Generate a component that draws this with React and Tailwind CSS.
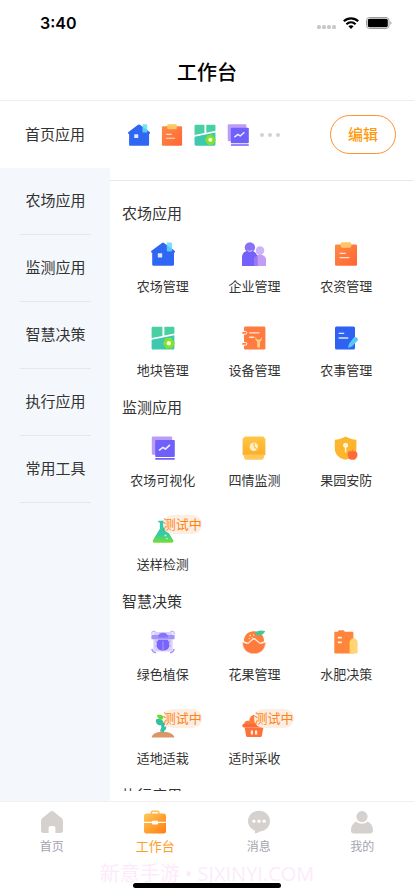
import { useState } from "react";

const HouseIcon = ({ className }) => (
  <svg viewBox="0 0 24 24" className={className} aria-hidden="true">
    <path
      d="M11 .9a1.500 1.500 0 0 1 2 0L23.600 8.800c.8.7.5 2-.6 2v11.800c0 .8-.5 1.200-1.200 1.200H2.400c-.8 0-1.200-.5-1.200-1.200V10.800c-1.200 0-1.500-1.300-.7-2z"
      fill="#2f66f3"
    />
    <rect x="6.800" y="11.200" width="4.400" height="4.200" rx=".5" fill="#dbe8ff" />
    <rect x="15.800" y=".4" width="5.200" height="9" rx=".8" fill="#5fd9f5" fillOpacity=".85" />
  </svg>
);

const PeopleIcon = ({ className }) => (
  <svg viewBox="0 0 24 24" className={className} aria-hidden="true">
    <circle cx="18" cy="8.600" r="4.300" fill="#cdb4f9" />
    <path d="M12 24v-6c0-3.400 2.200-5.200 6-5.200s6.200 2 6.200 5.400V24z" fill="#c39cf8" />
    <circle cx="7.900" cy="5.400" r="5.200" fill="#8a72f6" />
    <path d="M0 24v-8.600C0 11.200 2.800 8.800 7.700 8.800s7.600 2.400 7.600 6.600V24z" fill="#7460fa" />
    <path d="M15.300 13.600V24H12v-6.400c0-1.800 1-3.400 3.300-4z" fill="#9a78f2" />
    <path d="M5.400 8.200c1.300 1.500 3.600 1.500 4.900 0" fill="none" stroke="#e4dcff" strokeWidth=".9" />
  </svg>
);

const ClipboardIcon = ({ className }) => (
  <svg viewBox="0 0 24 24" className={className} aria-hidden="true">
    <defs>
      <linearGradient id="clip" x1="0" y1="0" x2="1" y2="1">
        <stop offset="0" stopColor="#ff8a45" />
        <stop offset="1" stopColor="#ff6534" />
      </linearGradient>
    </defs>
    <rect x="1" y="2.400" width="22" height="21.400" rx="1.400" fill="url(#clip)" />
    <rect x="6.800" y=".3" width="10.400" height="5.400" rx="1.400" fill="#ffc764" />
    <path d="M5.600 11.300h6M5.600 15.600h9.800" stroke="#ffe2d0" strokeWidth="1.200" />
  </svg>
);

const FieldIcon = ({ className }) => (
  <svg viewBox="0 0 24 24" className={className} aria-hidden="true">
    <path d="M2 .8h9.400v9.100L.6 12V2.200C.6 1.300 1.100.8 2 .8z" fill="#48cfa4" />
    <path d="M13.400.8H22c.9 0 1.400.5 1.400 1.400v5.200l-10 2.100z" fill="#48cfa4" />
    <path d="M.6 13.800 23.400 9.200v13c0 .9-.5 1.400-1.400 1.400H2c-.9 0-1.400-.5-1.400-1.400z" fill="#3dc8af" />
    <path d="m14.500 12.200 5.400-.4 4 5.300-2.700 5.200-5.800.5-3.400-5.200z" fill="#86e02d" />
    <circle cx="17.800" cy="17.300" r="2.200" fill="#eaffd7" />
  </svg>
);

const DeviceIcon = ({ className }) => (
  <svg viewBox="0 0 24 24" className={className} aria-hidden="true">
    <rect x="2" y=".6" width="21.400" height="23" rx="1.400" fill="#ff7b40" />
    <path
      d="M.4 5.400h3a1.400 1.400 0 0 1 0 2.800h-3M.4 16.400h3a1.400 1.400 0 0 1 0 2.800h-3"
      fill="#ff7b40"
      stroke="#fff"
      strokeWidth="1"
    />
    <path d="M7.200 6.900h10.300M7.200 11.200h5" stroke="#ffe6d6" strokeWidth="1.400" />
    <path
      d="M13.800 10.800c-1 2.200-.1 4 1.400 4.900v4.700c0 1.800 2.800 1.800 2.800 0v-4.700c1.600-.9 2.400-2.700 1.400-4.900l-.9 2.700h-3.800z"
      fill="#ffd085"
    />
  </svg>
);

const FarmWorkIcon = ({ className }) => (
  <svg viewBox="0 0 24 24" className={className} aria-hidden="true">
    <rect x="1" y=".4" width="20" height="23.200" rx="1.500" fill="#2f62f2" />
    <path d="M4.600 7.400h5.600M4.600 12h9.600" stroke="#dce6ff" strokeWidth="1.300" />
    <path d="M19.800 11.400c1.600-1.500 5.200.8 3.800 3l-5.600 6.200-4 1.300.9-3.800z" fill="#54c9f8" />
  </svg>
);

const ChartIcon = ({ className }) => (
  <svg viewBox="0 0 24 24" className={className} aria-hidden="true">
    <rect x=".8" y=".4" width="20.400" height="18.400" rx="1.200" fill="#bd9cf8" />
    <rect x="4.200" y="4" width="19.600" height="17" rx="1" fill="#7060fa" />
    <path d="m8 14.300 4-3 2.400 1.800 4.600-4.200" fill="none" stroke="#f0edff" strokeWidth="1.500" strokeLinejoin="round" />
    <rect x="4.200" y="22" width="19.600" height="1.800" rx=".6" fill="#7060fa" />
  </svg>
);

const MonitorIcon = ({ className }) => (
  <svg viewBox="0 0 24 24" className={className} aria-hidden="true">
    <defs>
      <linearGradient id="monitor" x1="0" y1="0" x2="0" y2="1">
        <stop offset="0" stopColor="#ffc648" />
        <stop offset="1" stopColor="#fdae25" />
      </linearGradient>
    </defs>
    <path d="M2.800.6h18.400l2.200 2.300v16.400H.6V2.900z" fill="url(#monitor)" />
    <path d="M2 18.400h20v3l-1.500 2.400h-17L2 21.400z" fill="#ffc75a" />
    <circle cx="11.800" cy="10.700" r="4.200" fill="#ffeec5" />
    <path d="M12 10.600V6.900M12 10.600l3 2.600" stroke="#fdbb3c" strokeWidth="1.100" />
  </svg>
);

const ShieldIcon = ({ className }) => (
  <svg viewBox="0 0 24 24" className={className} aria-hidden="true">
    <path
      d="M11.600.6c3.400 2.100 6.600 3 10.800 3.200v8.700c0 5.700-4 9.800-10.900 11.300C4.700 22.300.8 18.200.8 12.500V3.800C4.900 3.600 8.200 2.700 11.600.6z"
      fill="#fdb52c"
    />
    <circle cx="11.600" cy="9.200" r="2.500" fill="#fff4d8" />
    <path d="M11.600 10.500v5.300" stroke="#fff4d8" strokeWidth="1.500" strokeLinecap="round" />
    <path
      d="M18.300 15.600c2.700-1.700 5.300-.2 5.200 3.200-.1 2.600-2 5-3.600 5h-2.800c-1.900-.2-3.500-2.400-3.500-5 0-3.300 2.200-4.800 4.700-3.200z"
      fill="#ff6a3a"
    />
    <path d="M18.300 15.800c.1-1.200.4-1.900 1-2.500" stroke="#ff6a3a" strokeWidth="1" fill="none" />
  </svg>
);

const FlaskIcon = ({ className }) => (
  <svg viewBox="0 0 24 24" className={className} aria-hidden="true">
    <defs>
      <linearGradient id="flask" x1="0" y1="0" x2="0" y2="1">
        <stop offset="0" stopColor="#31c6bb" />
        <stop offset=".6" stopColor="#34cba4" />
        <stop offset="1" stopColor="#74e032" />
      </linearGradient>
    </defs>
    <path
      d="M7.400.8h8.400c.9 0 .9 1.600 0 1.600h-.5v6.400l6.800 11.300c.9 1.500.1 2.700-1.300 2.700H3.400C2 22.800 1.200 21.600 2.100 20.100L8.900 8.800V2.400h-.9C7 2.400 7 .8 7.400.8z"
      fill="url(#flask)"
    />
    <circle cx="14.500" cy="15.400" r="1" fill="#c7f4e2" />
    <circle cx="16" cy="18.600" r=".8" fill="#c7f4e2" />
  </svg>
);

const BugIcon = ({ className }) => (
  <svg viewBox="0 0 24 24" className={className} aria-hidden="true">
    <rect x="2.400" y="2" width="19.200" height="19.600" rx="1.600" fill="#dccffc" />
    <path d="M.9 4.500V3A1.700 1.700 0 0 1 2.600 1.300h2M23.100 4.500V3a1.700 1.700 0 0 0-1.700-1.700h-2" stroke="#c4b3fa" strokeWidth="1.200" fill="none" />
    <path d="M.9 18.800c.3 2.200 1.600 3.600 4 4M23.100 18.800c-.3 2.200-1.600 3.600-4 4" stroke="#a792f8" strokeWidth="1.400" fill="none" />
    <rect x=".4" y="5" width="23.200" height="4.200" rx=".7" fill="#a295fa" />
    <path d="M7.400 5.800c0-4.200 9.200-4.200 9.200 0v1.600H7.400z" fill="#8474f9" />
    <path d="M7.200 9.800h9.600l1.400 2.400v3.200c0 3.200-2.500 5.100-6.200 5.100s-6.200-1.900-6.200-5.100v-3.200z" fill="#7764fa" />
    <path d="M12 11.400v9M6.500 11.800l-2-.8M17.500 11.800l2-.8M6 15.500l-1.800.8M18 15.500l1.800.8" stroke="#a99afc" strokeWidth="1" />
  </svg>
);

const FruitIcon = ({ className }) => (
  <svg viewBox="0 0 24 24" className={className} aria-hidden="true">
    <path d="M1.900 11.200C2 5.200 6 1.300 12 1.300s10 3.900 10.100 9.900l-4.100 1.600-4.700-4.200c-.8-.7-1.900-.7-2.700 0L6 12.800z" fill="#ff7f3a" />
    <path
      d="M.5 12.200c2.400.6 3.700 1.400 5.600 1.500l4.600-3.900c.8-.7 1.700-.7 2.500 0l4.700 3.900c1.900-.1 3.300-.9 5.600-1.500 0 6.900-4.700 11.600-11.500 11.600S.5 19.100.5 12.200z"
      fill="#ff7a3c"
      stroke="#ffe0cb"
      strokeWidth=".7"
    />
    <path d="M12.700 3.300C14.700.3 19 0 23.200 1.100c-1.500 3.700-5 5-8.600 4z" fill="#42c79d" />
    <circle cx="8.200" cy="5.600" r=".8" fill="#fff0e4" />
    <circle cx="11.600" cy="5" r=".7" fill="#fff0e4" />
    <circle cx="7.200" cy="8.600" r=".7" fill="#fff0e4" />
    <circle cx="10" cy="7.600" r=".6" fill="#fff0e4" />
  </svg>
);

const FertilizerIcon = ({ className }) => (
  <svg viewBox="0 0 24 24" className={className} aria-hidden="true">
    <defs>
      <linearGradient id="fertilizer" x1="0" y1="0" x2="1" y2="0">
        <stop offset="0" stopColor="#ffd95c" />
        <stop offset="1" stopColor="#ffd285" />
      </linearGradient>
    </defs>
    <path d="M1.700 1.700h2L5 .3h4.500l1.400 1.400h7.200c.8 0 1.300.5 1.300 1.300v20.600H1.600C.8 23.600.3 23.100.3 22.300V3c0-.8.5-1.300 1.400-1.300z" fill="#ff853c" />
    <path d="M3.800 7.600h4M3.800 12.400h4" stroke="#fff2e6" strokeWidth="1.900" />
    <path d="M15.600 12.200c0-2.300 2.300-4 4.100-4 2 0 3.900 1.700 3.900 4v11.400h-8z" fill="url(#fertilizer)" />
  </svg>
);

const SproutIcon = ({ className }) => (
  <svg viewBox="0 0 24 24" className={className} aria-hidden="true">
    <path d="M.8 23.600c-.4-2.600 3-5.900 11-5.900s11.700 3.300 11.400 5.900z" fill="#dd9466" />
    <path d="M12.400 18.400c-2-3.600-.6-7-2-10M11.400 16c.1-4 2-7 5-8.400" stroke="#34c1a0" strokeWidth="1.800" fill="none" />
    <path d="M5 5.400c4-1.600 7.700.3 8 5-4.200 1.800-9 .5-8-5z" fill="#34c1a0" />
    <path d="M6 .9c3.500-.6 7.500.1 6.900 4.200-3.500.8-6.800-.4-6.900-4.200z" fill="#63df2a" />
    <path d="M13.300 9.200c.2-5 3.400-7.700 7.700-7.600.7 4.800-2.200 8.300-7.700 7.600z" fill="#46d280" />
    <path d="M9 17.400c.4-3.700 3-5.500 6.400-4.900-.1 3.900-2.700 6-6.400 4.900z" fill="#34c1a0" />
  </svg>
);

const BasketIcon = ({ className }) => (
  <svg viewBox="0 0 24 24" className={className} aria-hidden="true">
    <path d="M2 10.500C2.200 7.200 4.800 6 7.400 7.100 7.200 3.800 9.300 1 12.400 1c3 0 5 2.400 4.400 5.600 3-1.300 5.500.5 5.200 3.900z" fill="#ff7d3c" />
    <path d="M1.800 9.700h20.400c1.900 0 1.900 3.800 0 3.800H1.800c-1.900 0-1.900-3.800 0-3.800z" fill="#ff6937" />
    <path d="M2.600 13.400h18.800l-1.500 8.300c-.2.900-.8 1.400-1.700 1.400H5.800c-.9 0-1.500-.5-1.700-1.400z" fill="#ff7138" />
    <path d="M9.900 16.400v4M14.100 16.400v4" stroke="#ffeadc" strokeWidth="2.200" />
  </svg>
);

const HomeTabIcon = () => (
  <svg viewBox="0 0 24 24" className="size-6" aria-hidden="true">
    <path
      d="M10.400 1.600a2.600 2.600 0 0 1 3.200 0l8.100 6.600c.9.800 1.300 1.700 1.300 2.800v9.600c0 1.500-1 2.400-2.400 2.400h-5.200v-4.700c0-1.400-.8-2.200-2.200-2.200h-2.400c-1.400 0-2.200.8-2.200 2.200V23H3.400C2 23 1 22.100 1 20.600V11c0-1.100.4-2 1.300-2.800z"
      fill="#d5d1cf"
    />
  </svg>
);

const WorkTabIcon = () => (
  <svg viewBox="0 0 24 24" className="size-6" aria-hidden="true">
    <defs>
      <linearGradient id="work" x1="0" y1="0" x2="1" y2="1">
        <stop offset="0" stopColor="#ffc95c" />
        <stop offset=".5" stopColor="#ffa232" />
        <stop offset="1" stopColor="#ff7e14" />
      </linearGradient>
    </defs>
    <path d="M8.300 4V2.700c0-1 .6-1.500 1.500-1.500h4.700c.9 0 1.500.5 1.500 1.500V4" stroke="#ffbd55" strokeWidth="1.500" fill="none" />
    <rect x="1" y="3.400" width="22" height="20" rx="2.500" fill="url(#work)" />
    <path d="M1 12.300h7.800M15.200 12.300H23" stroke="#fff" strokeWidth="1.200" />
    <rect x="8.800" y="10.800" width="6.400" height="3.800" rx="1.300" fill="#fff" />
  </svg>
);

const MessageTabIcon = () => (
  <svg viewBox="0 0 24 24" className="size-6" aria-hidden="true">
    <path
      d="M12 .8c6.200 0 11 4.300 11 10.300 0 6.100-4.600 9.900-10 10.400-1.400 1.100-3.500 1.800-5.600 1.900.6-.9.800-1.800.7-2.700C3.900 19.100 1 15.600 1 11.100 1 5.100 5.800.8 12 .8z"
      fill="#d5d1cf"
    />
    <circle cx="6.900" cy="11.200" r="1.600" fill="#fff" />
    <circle cx="12" cy="11.200" r="1.600" fill="#fff" />
    <circle cx="17.100" cy="11.200" r="1.600" fill="#fff" />
  </svg>
);

const UserTabIcon = () => (
  <svg viewBox="0 0 24 24" className="size-6" aria-hidden="true">
    <circle cx="12" cy="6.600" r="5.600" fill="#d5d1cf" />
    <path d="M6.300 11.600c3.300 2.900 8.100 2.900 11.400 0 3.300 1.500 5.300 5 5.300 9 0 2.100-1 3-2.900 3H3.900C2 23.600 1 22.700 1 20.600c0-4 2-7.500 5.300-9z" fill="#d5d1cf" />
  </svg>
);

const categories = ["农场应用", "监测应用", "智慧决策", "执行应用", "常用工具"];

const pinned = [
  { label: "农场管理", Icon: HouseIcon },
  { label: "农资管理", Icon: ClipboardIcon },
  { label: "地块管理", Icon: FieldIcon },
  { label: "农场可视化", Icon: ChartIcon },
];

const sections = [
  {
    title: "农场应用",
    apps: [
      { label: "农场管理", Icon: HouseIcon },
      { label: "企业管理", Icon: PeopleIcon },
      { label: "农资管理", Icon: ClipboardIcon },
      { label: "地块管理", Icon: FieldIcon },
      { label: "设备管理", Icon: DeviceIcon },
      { label: "农事管理", Icon: FarmWorkIcon },
    ],
  },
  {
    title: "监测应用",
    apps: [
      { label: "农场可视化", Icon: ChartIcon },
      { label: "四情监测", Icon: MonitorIcon },
      { label: "果园安防", Icon: ShieldIcon },
      { label: "送样检测", Icon: FlaskIcon, testing: true },
    ],
  },
  {
    title: "智慧决策",
    apps: [
      { label: "绿色植保", Icon: BugIcon },
      { label: "花果管理", Icon: FruitIcon },
      { label: "水肥决策", Icon: FertilizerIcon },
      { label: "适地适栽", Icon: SproutIcon, testing: true },
      { label: "适时采收", Icon: BasketIcon, testing: true },
    ],
  },
  { title: "执行应用", apps: [] },
];

const tabs = [
  { label: "首页", Icon: HomeTabIcon },
  { label: "工作台", Icon: WorkTabIcon },
  { label: "消息", Icon: MessageTabIcon },
  { label: "我的", Icon: UserTabIcon },
];

const StatusBar = () => (
  <div className="flex h-11 items-center justify-between pt-0.5 pr-[22px] pl-10">
    <span className="font-['Inter','Liberation_Sans',sans-serif] text-base font-semibold text-black">
      3:40
    </span>
    <div className="flex items-center gap-[7px]">
      <svg viewBox="0 0 19 16" className="h-4 w-[19px]" aria-hidden="true">
        <g fill="#c9c9c9">
          <rect x="0" y="10" width="4" height="4" rx="1.500" />
          <rect x="5" y="10" width="4" height="4" rx="1.500" />
          <rect x="10" y="10" width="4" height="4" rx="1.500" />
          <rect x="15" y="10" width="4" height="4" rx="1.500" />
        </g>
      </svg>
      <svg viewBox="0 0 16 12" className="h-3 w-4" aria-hidden="true">
        <g fill="none" stroke="#000" strokeWidth="2.200">
          <path d="M.8 4.300c4.100-3.900 10.300-3.900 14.400 0" />
          <path d="M3.400 7.200c2.700-2.500 6.500-2.500 9.200 0" />
        </g>
        <path d="M5.400 9.200c1.500-1.400 3.700-1.400 5.200 0L8 11.900z" fill="#000" />
      </svg>
      <svg viewBox="0 0 26 12" className="h-3 w-[26px]" aria-hidden="true">
        <rect x=".5" y=".5" width="22.500" height="11" rx="3" fill="none" stroke="#9b9b9b" />
        <rect x="1.800" y="1.800" width="20" height="8.400" rx="1.600" fill="#000" />
        <path d="M24.300 4.200c1.600.5 1.600 3.100 0 3.600z" fill="#9b9b9b" />
      </svg>
    </div>
  </div>
);

const AppItem = ({ app }) => {
  const { label, Icon, testing } = app;
  return (
    <button type="button" className="flex h-[84px] flex-col items-center gap-[10px] pt-4">
      <span className="relative">
        <Icon className="size-6" />
        {testing ? (
          <span className="absolute -top-[5px] left-1/2 rounded-full bg-[#fdeee3] pb-0.5 text-[13px] leading-[17px] whitespace-nowrap text-[#ff8416]">
            测试中
          </span>
        ) : null}
      </span>
      <span className="text-[13px] leading-5">{label}</span>
    </button>
  );
};

export default function App() {
  const [activeTab, setActiveTab] = useState("工作台");

  return (
    <div className="flex h-screen flex-col overflow-hidden bg-white font-['Noto_Sans_CJK_SC',sans-serif] text-[#333333]">
      <header className="border-b border-[#eeeeee]">
        <StatusBar />
        <h1 className="h-14 text-center text-xl leading-14 font-medium text-black">工作台</h1>
      </header>

      <main className="flex min-h-0 flex-1">
        <aside className="flex w-[110px] shrink-0 flex-col bg-[#f4f8fc] text-[15px]">
          <button type="button" className="h-[67px] bg-white">
            首页应用
          </button>
          <nav className="flex flex-col pr-[19px] pl-5">
            {categories.map((name) => (
              <button
                key={name}
                type="button"
                className="h-[67px] border-b border-[#e4e8ec] pb-0.5"
              >
                {name}
              </button>
            ))}
          </nav>
        </aside>

        <div className="flex min-w-0 flex-1 flex-col">
          <div className="flex h-20 shrink-0 items-center border-b border-[#e9e9e9] pr-[18px] pb-3 pl-[18px]">
            <div className="flex items-center gap-[11px]">
              {pinned.map(({ label, Icon }) => (
                <button key={label} type="button" aria-label={label}>
                  <Icon className="size-[22px]" />
                </button>
              ))}
              <svg viewBox="0 0 20 4" className="h-1 w-5" aria-hidden="true">
                <circle cx="2" cy="2" r="2" fill="#d3d3d3" />
                <circle cx="10" cy="2" r="2" fill="#d3d3d3" />
                <circle cx="18" cy="2" r="2" fill="#d3d3d3" />
              </svg>
            </div>
            <button
              type="button"
              className="ml-auto h-[39px] w-[66px] rounded-full border border-[#ff922b] text-[15px] font-medium text-[#ff9a0c]"
            >
              编辑
            </button>
          </div>

          <div className="mb-[10px] min-h-0 flex-1 overflow-y-auto pt-[19px] [scrollbar-width:none]">
            {sections.map((section) => (
              <section key={section.title}>
                <h2 className="pl-3 text-[15px] leading-[26px]">{section.title}</h2>
                <div className="grid grid-cols-3 pr-[22px] pl-[7px]">
                  {section.apps.map((app) => (
                    <AppItem key={app.label} app={app} />
                  ))}
                </div>
              </section>
            ))}
          </div>
        </div>
      </main>

      <footer className="border-t border-[#f0f0f0] bg-white">
        <nav className="grid h-15 grid-cols-4 pt-2">
          {tabs.map(({ label, Icon }) => (
            <button
              key={label}
              type="button"
              onClick={() => setActiveTab(label)}
              className="flex flex-col items-center gap-1"
            >
              <Icon />
              <span
                className={
                  label === activeTab
                    ? "text-[13px] leading-4 text-[#ff9d2b]"
                    : "text-xs leading-4 text-[#a3a3b0]"
                }
              >
                {label}
              </span>
            </button>
          ))}
        </nav>
        <div className="relative h-[34px] text-center">
          <p className="font-['Open_Sans','Noto_Sans_CJK_SC',sans-serif] text-xl leading-6 text-[#fdebfc]">
            新意手游 • SJXINYI.COM
          </p>
          <div className="absolute bottom-2 left-1/2 h-[5px] w-[148px] -translate-x-1/2 rounded-full bg-black" />
        </div>
      </footer>
    </div>
  );
}
